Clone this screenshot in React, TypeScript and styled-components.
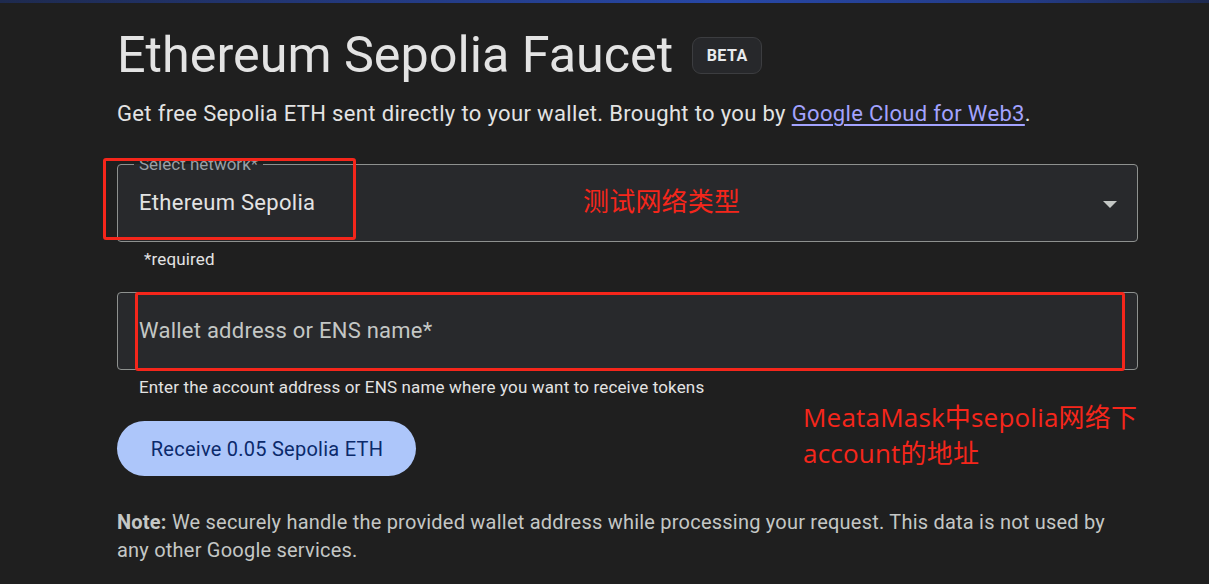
import React from "react";
import styled, { createGlobalStyle } from "styled-components";

const GlobalStyle = createGlobalStyle`
  html, body { margin: 0; padding: 0; background: #1f1f1f; }
  body { font-family: Roboto, "Liberation Sans", sans-serif; color: #e3e3e3; }
  * { box-sizing: border-box; }
`;

const Screen = styled.div`
  position: relative;
  width: 1209px;
  height: 584px;
  overflow: hidden;
  background: #1f1f1f;
`;

const TopBar = styled.div`
  height: 3px;
  background: linear-gradient(90deg, #1e2a4e 0%, #23397e 30%, #2747a6 60%, #233b86 85%, #1e2a50 100%);
`;

const Page = styled.main`
  width: 1021px;
  margin-left: 117px;
  display: flex;
  flex-direction: column;
`;

const TitleRow = styled.div`
  display: flex;
  align-items: center;
  gap: 19px;
  margin-top: 22px;
`;

const Title = styled.h1`
  margin: 0;
  font-size: 50.3px;
  line-height: 60px;
  font-weight: 400;
  color: #e3e3e3;
`;

const Badge = styled.span`
  display: inline-flex;
  align-items: center;
  justify-content: center;
  width: 70px;
  height: 37px;
  border: 1px solid #3c3d40;
  border-radius: 9px;
  background: #27282b;
  color: #e8eaed;
  font-size: 16px;
  font-weight: 700;
  letter-spacing: 0.5px;
`;

const Subtitle = styled.p`
  margin: 15px 0 0;
  font-size: 22px;
  line-height: 28px;
  letter-spacing: 0.35px;
  color: #e3e3e3;
`;

const Link = styled.a`
  color: #a3a3ff;
  text-decoration: underline;
  text-underline-offset: 3px;
`;

const Field = styled.div<{ $top: number }>`
  position: relative;
  margin-top: ${(p) => p.$top}px;
  height: 78px;
  border: 1px solid #8e918f;
  border-radius: 4px;
  background: #28292c;
  display: flex;
  align-items: center;
  justify-content: space-between;
  padding: 0 20px 0 21px;
`;

const FloatLabel = styled.span`
  position: absolute;
  left: 16px;
  top: -11px;
  padding: 0 5px;
  font-size: 17px;
  line-height: 20px;
  color: #9aa0a6;
  background: linear-gradient(#1f1f1f 0 50%, #28292c 50% 100%);
`;

const FieldValue = styled.span<{ $muted?: boolean; $ls: number }>`
  font-size: 22px;
  line-height: 28px;
  letter-spacing: ${(p) => p.$ls}px;
  color: ${(p) => (p.$muted ? "#c4c7c5" : "#e3e3e3")};
`;

const Arrow = styled.span`
  width: 0;
  height: 0;
  border-left: 7px solid transparent;
  border-right: 7px solid transparent;
  border-top: 7px solid #c4c7c5;
  margin-top: 2px;
`;

const Helper = styled.div<{ $left: number }>`
  margin: 6px 0 0 ${(p) => p.$left}px;
  font-size: 17px;
  line-height: 22px;
  letter-spacing: 0.15px;
  color: #e3e3e3;
`;

const Button = styled.button`
  margin-top: 23px;
  align-self: flex-start;
  width: 299px;
  height: 55px;
  border: none;
  border-radius: 28px;
  background: #adc6fa;
  color: #0b2a6b;
  font-family: Roboto, "Liberation Sans", sans-serif;
  font-size: 20px;
  font-weight: 400;
  letter-spacing: 0.25px;
  padding: 0 0 0 1px;
  cursor: pointer;
`;

const Note = styled.p`
  margin: 32px 0 0;
  font-size: 20px;
  line-height: 28px;
  letter-spacing: 0.22px;
  color: #c4c7c5;
  width: 1000px;
  b { color: #c4c7c5; font-weight: 700; }
`;

const RedBox = styled.div<{ $l: number; $t: number; $w: number; $h: number }>`
  position: absolute;
  left: ${(p) => p.$l}px;
  top: ${(p) => p.$t}px;
  width: ${(p) => p.$w}px;
  height: ${(p) => p.$h}px;
  border: 3px solid #f5261b;
  border-radius: 3px;
  pointer-events: none;
`;

const RedNote = styled.div<{ $l: number; $t: number }>`
  position: absolute;
  left: ${(p) => p.$l}px;
  top: ${(p) => p.$t}px;
  font-family: "Open Sans", "Noto Sans CJK SC", sans-serif;
  font-size: 26px;
  line-height: 36px;
  letter-spacing: 0.2px;
  color: #f5261b;
  white-space: nowrap;
`;

export default function App() {
  return (
    <Screen>
      <GlobalStyle />
      <TopBar />
      <Page>
        <TitleRow>
          <Title>Ethereum Sepolia Faucet</Title>
          <Badge>BETA</Badge>
        </TitleRow>
        <Subtitle>
          Get free Sepolia ETH sent directly to your wallet. Brought to you by{" "}
          <Link href="#">Google Cloud for Web3</Link>.
        </Subtitle>
        <Field $top={36}>
          <FloatLabel>Select network*</FloatLabel>
          <FieldValue $ls={0.3}>Ethereum Sepolia</FieldValue>
          <Arrow />
          <RedBox $l={-15} $t={-7} $w={253} $h={82} />
          <RedNote $l={465} $t={18}>测试网络类型</RedNote>
        </Field>
        <Helper $left={27}>*required</Helper>
        <Field $top={22}>
          <FieldValue $muted $ls={0.25}>Wallet address or ENS name*</FieldValue>
          <RedBox $l={17} $t={-1} $w={990} $h={79} />
        </Field>
        <Helper $left={22}>
          Enter the account address or ENS name where you want to receive tokens
        </Helper>
        <Button>Receive 0.05 Sepolia ETH</Button>
        <Note>
          <b>Note:</b> We securely handle the provided wallet address while processing your request. This data is not used by any other Google services.
        </Note>
      </Page>
      <RedNote $l={803} $t={399}>
        MeataMask中sepolia网络下
        <br />
        account的地址
      </RedNote>
    </Screen>
  );
}
